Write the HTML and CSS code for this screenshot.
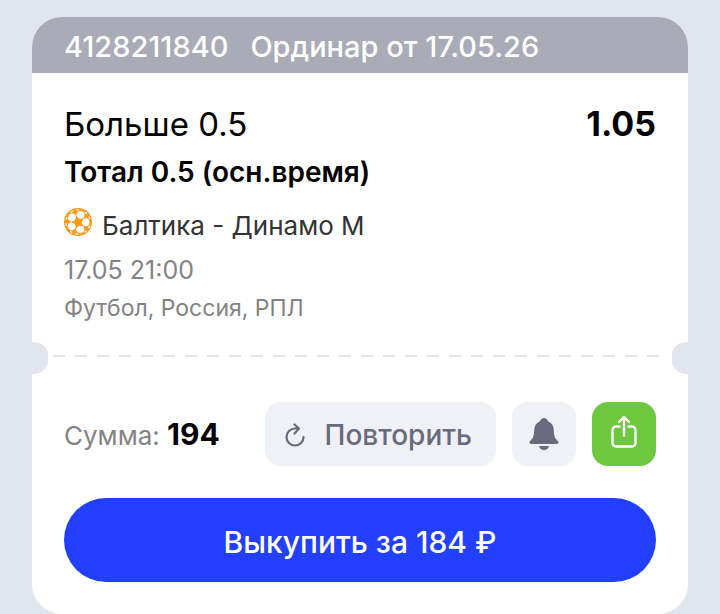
FILE: index.html
```html
<!DOCTYPE html>
<html lang="ru">
<head>
  <meta charset="UTF-8">
  <meta name="viewport" content="width=device-width, initial-scale=1">
  <title>Ординар 4128211840</title>
  <link rel="stylesheet" href="styles.css">
</head>
<body>
  <article class="bet-card">
    <header class="bet-header">
      <span>4128211840</span>
      <span>Ординар от 17.05.26</span>
    </header>

    <div class="bet-info">
      <div class="bet-outcome">
        <h1>Больше 0.5</h1>
        <strong class="odds">1.05</strong>
      </div>
      <h2 class="market">Тотал 0.5 (осн.время)</h2>
      <div class="match">
        <svg class="ball" viewBox="0 0 28 28" aria-hidden="true">
          <circle cx="14" cy="14" r="14" fill="#fb9a1c"/>
          <g fill="#fff">
            <ellipse cx="14" cy="6.500" rx="4.100" ry="3.900" transform="rotate(20 14 14)"/>
            <ellipse cx="14" cy="6.500" rx="4.100" ry="3.900" transform="rotate(92 14 14)"/>
            <ellipse cx="14" cy="6.500" rx="4.100" ry="3.900" transform="rotate(164 14 14)"/>
            <ellipse cx="14" cy="6.500" rx="4.100" ry="3.900" transform="rotate(236 14 14)"/>
            <ellipse cx="14" cy="6.500" rx="4.100" ry="3.900" transform="rotate(308 14 14)"/>
          </g>
          <path fill="#fb9a1c" transform="rotate(-16 14 14)" d="M14 7.500l1.900 4.300 4.700.5-3.500 3.200 1 4.600-4.100-2.400-4.100 2.400 1-4.600-3.500-3.200 4.700-.5z"/>
          <g fill="none" stroke="#fff" stroke-width="1.300" stroke-linecap="round">
            <path d="M10.200 2.500l1.600-.5M16.200 2l1.600.5" transform="rotate(-16 14 14)"/>
            <path d="M10.200 2.500l1.600-.5M16.200 2l1.600.5" transform="rotate(56 14 14)"/>
            <path d="M10.200 2.500l1.600-.5M16.200 2l1.600.5" transform="rotate(128 14 14)"/>
            <path d="M10.200 2.500l1.600-.5M16.200 2l1.600.5" transform="rotate(200 14 14)"/>
            <path d="M10.200 2.500l1.600-.5M16.200 2l1.600.5" transform="rotate(272 14 14)"/>
          </g>
        </svg>
        <span>Балтика - Динамо М</span>
      </div>
      <p class="details match-date">17.05 21:00</p>
      <p class="details">Футбол, Россия, РПЛ</p>
    </div>

    <div class="tear-line">
      <span class="notch notch-left"></span>
      <span class="dashes"></span>
      <span class="notch notch-right"></span>
    </div>

    <footer class="bet-footer">
      <div class="actions">
        <p class="amount">Сумма: <strong>194</strong></p>
        <button type="button" class="btn btn-repeat">
          <svg class="icon-repeat" viewBox="0 0 20 24" aria-hidden="true">
            <path d="M13.500 5.500H10a8.500 8.500 0 1 0 8.500 8.500M9.500 1.500l4.500 4-4.500 5" fill="none" stroke="currentColor" stroke-width="2.200" stroke-linecap="round" stroke-linejoin="round"/>
          </svg>
          Повторить
        </button>
        <button type="button" class="btn btn-icon" aria-label="Уведомления">
          <svg class="icon-bell" viewBox="0 0 30 34" aria-hidden="true">
            <path fill="currentColor" d="M15 1c2 0 3.600 1.300 4 3.200 3.800 1.600 5.700 4.800 5.800 9 .1 5.400.9 7.300 3.600 10.300.9 1 1.300 1.700 1.100 2.300-.2.700-.8 1.100-1.700 1.100H2.200c-.9 0-1.500-.4-1.700-1.100-.2-.6.2-1.300 1.100-2.300 2.700-3 3.500-4.900 3.600-10.300.1-4.200 2-7.400 5.800-9C11.400 2.300 13 1 15 1zM10 29h10c-.5 2.500-2.500 4-5 4s-4.500-1.500-5-4z"/>
          </svg>
        </button>
        <button type="button" class="btn btn-icon btn-share" aria-label="Поделиться">
          <svg class="icon-share" viewBox="0 0 26 34" aria-hidden="true">
            <path d="M8.500 11.500H5a3.500 3.500 0 0 0-3.500 3.500v13A3.500 3.500 0 0 0 5 31.500h16a3.500 3.500 0 0 0 3.500-3.500V15a3.500 3.500 0 0 0-3.500-3.500h-3.500M13 20.500v-18M8 7l5-5 5 5" fill="none" stroke="currentColor" stroke-width="2.400" stroke-linecap="round" stroke-linejoin="round"/>
          </svg>
        </button>
      </div>
      <button type="button" class="btn-cashout">Выкупить за 184 ₽</button>
    </footer>
  </article>
</body>
</html>
```
FILE: styles.css
```css
:root {
  --page-bg: #e1e5ee;
  --header-bg: #a9acb6;
  --button-bg: #f0f1f6;
  --button-text: #676b7b;
  --muted: #838383;
  --green: #6dc83f;
  --blue: #233fff;
}

* {
  box-sizing: border-box;
}

body {
  margin: 0;
  padding: 17px 32px 0;
  background-color: var(--page-bg);
  color: #000;
  font-family: Inter, "Liberation Sans", sans-serif;
}

h1,
h2,
p {
  margin: 0;
}

button {
  border: 0;
  font-family: inherit;
  cursor: pointer;
}

svg {
  display: block;
  flex: none;
}

.bet-card {
  background-color: #fff;
  border-radius: 30px;
  overflow: hidden;
}

.bet-header {
  display: flex;
  gap: 22px;
  padding: 4px 32px 0;
  background-color: var(--header-bg);
  color: #fff;
  font-size: 29px;
  font-weight: 500;
  line-height: 52px;
}

.bet-info {
  padding: 27px 32px 16px;
}

.bet-outcome {
  display: flex;
  justify-content: space-between;
  font-size: 34px;
  line-height: 48px;
}

.bet-outcome h1 {
  font-size: 33px;
  font-weight: 400;
}

.odds {
  font-weight: 700;
}

.market {
  font-size: 28px;
  font-weight: 600;
  line-height: 48px;
}

.match {
  display: flex;
  gap: 10px;
  margin-top: 5px;
  color: #333;
  font-size: 26px;
  line-height: 50px;
}

.ball {
  width: 28px;
  height: 28px;
  margin-top: 7px;
}

.details {
  color: var(--muted);
  font-size: 23px;
  line-height: 38px;
}

.match-date {
  font-size: 25px;
}

/* Perforated line between the bet and its actions */
.tear-line {
  display: flex;
  height: 32px;
  margin-top: -1px;
}

.notch {
  width: 16px;
  background-color: var(--page-bg);
}

.notch-left {
  border-radius: 0 14px 14px 0;
}

.notch-right {
  border-radius: 14px 0 0 14px;
}

.dashes {
  flex: 1;
  height: 2px;
  margin: 13px 12px 0 5px;
  background: repeating-linear-gradient(to right, #e1e5ea 0 12px, transparent 12px 22px);
}

.bet-footer {
  padding: 28px 32px 32px;
}

.actions {
  display: flex;
  align-items: center;
  gap: 16px;
  margin-bottom: 32px;
}

.amount {
  flex: 1;
  color: var(--muted);
  font-size: 26px;
  white-space: nowrap;
}

.amount strong {
  color: #000;
  font-size: 30px;
  font-weight: 700;
}

.btn {
  display: flex;
  align-items: center;
  justify-content: center;
  height: 64px;
  padding: 0;
  border-radius: 16px;
  background-color: var(--button-bg);
  color: var(--button-text);
}

.btn-repeat {
  gap: 20px;
  padding: 2px 24px 0 20px;
  font-size: 28px;
  font-weight: 500;
}

.btn-icon {
  width: 64px;
}

.btn-share {
  background-color: var(--green);
  color: #fff;
}

.icon-repeat {
  width: 20px;
  height: 24px;
}

.icon-bell {
  width: 30px;
  height: 34px;
}

.icon-share {
  width: 26px;
  height: 34px;
  margin-bottom: 4px;
}

.btn-cashout {
  display: block;
  width: 100%;
  height: 84px;
  padding: 4px 0 0;
  border-radius: 42px;
  background-color: var(--blue);
  color: #fff;
  font-size: 30px;
  font-weight: 500;
}
```
